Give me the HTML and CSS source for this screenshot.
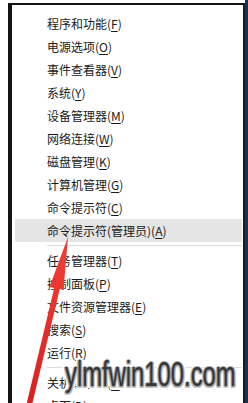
FILE: index.html
```html
<!DOCTYPE html>
<html lang="zh-CN">
<head>
<meta charset="utf-8">
<title>Win+X menu</title>
<link rel="stylesheet" href="styles.css">
</head>
<body>
<div class="desk">
  <div class="menu-wrap">
    <div class="menu">
      <div class="item">程序和功能(<u>F</u>)</div>
      <div class="item">电源选项(<u>O</u>)</div>
      <div class="item">事件查看器(<u>V</u>)</div>
      <div class="item">系统(<u>Y</u>)</div>
      <div class="item">设备管理器(<u>M</u>)</div>
      <div class="item">网络连接(<u>W</u>)</div>
      <div class="item">磁盘管理(<u>K</u>)</div>
      <div class="item">计算机管理(<u>G</u>)</div>
      <div class="item">命令提示符(<u>C</u>)</div>
      <div class="item active">命令提示符(管理员)(<u>A</u>)</div>
      <div class="sep"></div>
      <div class="item">任务管理器(<u>T</u>)</div>
      <div class="item">控制面板(<u>P</u>)</div>
      <div class="item">文件资源管理器(<u>E</u>)</div>
      <div class="item">搜索(<u>S</u>)</div>
      <div class="item">运行(<u>R</u>)</div>
      <div class="sep"></div>
      <div class="item">关机或注销(<u>U</u>)</div>
      <div class="item">桌面(<u>D</u>)</div>
    </div>
  </div>
  <div class="edge"></div>
</div>
<svg class="arrow" width="248" height="403" viewBox="0 0 248 403" xmlns="http://www.w3.org/2000/svg">
  <defs>
    <linearGradient id="ar" x1="0" y1="1" x2="0.3" y2="0">
      <stop offset="0" stop-color="#d8201c"/>
      <stop offset="1" stop-color="#ee3b33"/>
    </linearGradient>
  </defs>
  <polygon fill="url(#ar)" points="68,237 63.5,290 59.8,289 32.2,404 26.8,403 54.2,288 49.5,287"/>
</svg>
<div class="watermark">ylmfwin100.com</div>
</body>
</html>
```

FILE: styles.css
```css
html, body {
  margin: 0;
  padding: 0;
  background: #ffffff;
}

body {
  width: 248px;
  height: 403px;
  overflow: hidden;
  position: relative;
  font-family: "Noto Sans CJK SC", "Noto Sans", sans-serif;
}

.desk {
  display: flex;
  height: 403px;
}

.menu-wrap {
  flex: 1;
  padding: 3px 0 0 8px;
  min-width: 0;
}

.menu {
  height: 100%;
  box-sizing: border-box;
  border-top: 2px solid #141414;
  border-left: 4px solid #141414;
  border-right: 2px solid #1c1c1c;
  padding-top: 7px;
  background: #ffffff;
  overflow: hidden;
}

.edge {
  width: 3px;
  background: #123456;
}

.item {
  height: 23px;
  line-height: 23px;
  margin: 0 1px 0 3px;
  padding-left: 32px;
  font-size: 12px;
  color: #1a1a1a;
  white-space: nowrap;
}

.item u {
  text-decoration-thickness: 1px;
  text-underline-offset: 2px;
}

.item.active {
  background: #e5e5e5;
}

.sep {
  height: 1px;
  background: #dcdcdc;
  margin: 3px 1px 3px 35px;
}

.arrow {
  position: absolute;
  left: 0;
  top: 0;
  pointer-events: none;
}

.watermark {
  position: absolute;
  left: 65px;
  top: 356px;
  font-family: "Liberation Sans", Arial, sans-serif;
  font-size: 35px;
  line-height: 35px;
  color: #363636;
  white-space: nowrap;
  transform: scaleX(0.68);
  transform-origin: left top;
  text-shadow:
    1px 0 0 #a0a0a0, -1px 0 0 #a0a0a0, 0 1px 0 #a0a0a0, 0 -1px 0 #a8a8a8,
    1px 1px 0 #a8a8a8, -1px 1px 0 #a8a8a8,
    2px 0 0 #c4c4c4, -2px 0 0 #c4c4c4, 0 2px 0 #c4c4c4,
    2px 2px 0 #d6d6d6, -2px 2px 0 #d6d6d6,
    3px 0 0 #ffffff, -3px 0 0 #ffffff, 0 3px 0 #ffffff,
    4px 0 0 #ffffff, -4px 0 0 #ffffff, 0 4px 0 #ffffff,
    3px 3px 0 #ffffff, -3px 3px 0 #ffffff;
}
```
